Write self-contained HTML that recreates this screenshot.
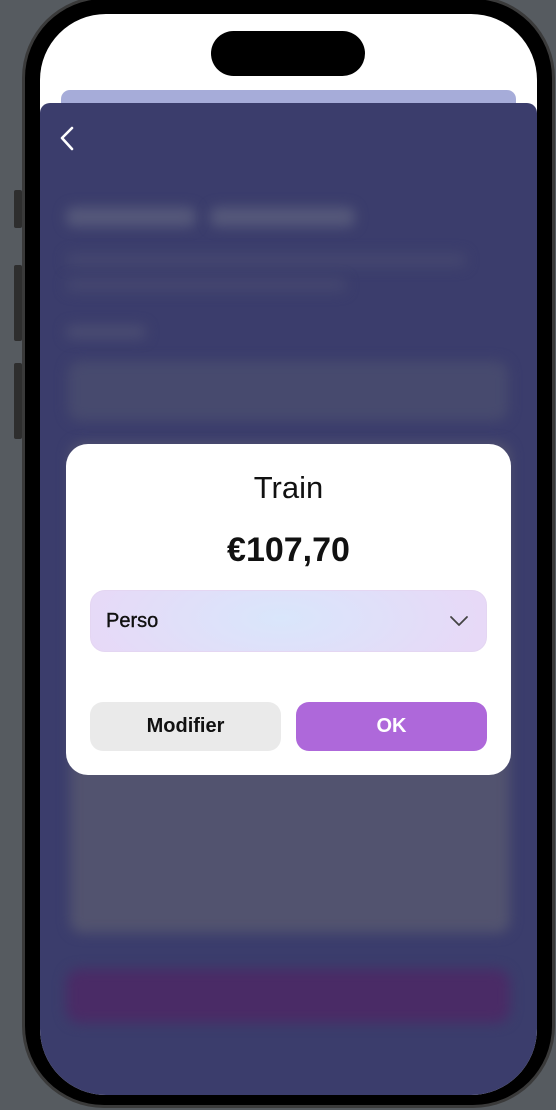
<!DOCTYPE html>
<html><head><meta charset="utf-8"><style>
*{margin:0;padding:0;box-sizing:border-box}
body{width:556px;height:1110px;background:#565b60;position:relative;overflow:hidden;font-family:"Liberation Sans",sans-serif}
.btn{position:absolute;left:14px;width:8px;background:#2e2e2e;border-radius:2px}
.frame{position:absolute;left:22px;top:-4px;width:533px;height:1112px;border-radius:82px;background:#3a3a3a}
.bezel{position:absolute;left:25px;top:-1px;width:527px;height:1106px;border-radius:79px;background:#000}
.screen{position:absolute;left:40px;top:14px;width:497px;height:1081px;border-radius:66px;background:#fff;overflow:hidden}
.island{position:absolute;left:171px;top:17px;width:154px;height:45px;border-radius:23px;background:#000}
.sheet2{position:absolute;left:21px;top:76px;width:455px;height:30px;border-radius:9px;background:#a6acd9}
.sheet{position:absolute;left:0;top:89px;width:497px;height:1000px;border-radius:10px 10px 0 0;background:#3b3d6c;overflow:hidden}
.bl{position:absolute;filter:blur(6px)}
</style></head><body>
<div class="btn" style="top:190px;height:38px"></div>
<div class="btn" style="top:265px;height:76px"></div>
<div class="btn" style="top:363px;height:76px"></div>
<div class="frame"></div>
<div class="bezel"></div>
<div class="screen">
  <div class="island"></div>
  <div class="sheet2"></div>
  <div class="sheet">
    <svg style="position:absolute;left:18px;top:22px" width="20" height="28" viewBox="0 0 20 28"><path d="M14 3 L4 13 L14 24" fill="none" stroke="#fff" stroke-width="2.6" stroke-linecap="round" stroke-linejoin="round"/></svg>
    <div class="bl" style="left:26px;top:104px;width:130px;height:20px;background:#55587a;border-radius:8px"></div>
    <div class="bl" style="left:170px;top:104px;width:145px;height:20px;background:#55587a;border-radius:8px"></div>
    <div class="bl" style="left:26px;top:150px;width:400px;height:14px;background:#44466f;border-radius:6px"></div>
    <div class="bl" style="left:26px;top:175px;width:280px;height:14px;background:#44466f;border-radius:6px"></div>
    <div class="bl" style="left:26px;top:222px;width:80px;height:14px;background:#4a4c72;border-radius:6px"></div>
    <div class="bl" style="left:28px;top:258px;width:440px;height:60px;background:#474a6e;border-radius:12px"></div>
    <div class="bl" style="left:30px;top:340px;width:440px;height:490px;background:#52536f;border-radius:12px"></div>
    <div class="bl" style="left:26px;top:866px;width:444px;height:54px;background:#4a2b66;border-radius:14px"></div>
  </div>
</div>
<div style="position:absolute;left:66px;top:444px;width:445px;height:331px;background:#fff;border-radius:22px">
  <div style="position:absolute;left:0;width:100%;top:26px;text-align:center;font-size:31px;color:#111">Train</div>
  <div style="position:absolute;left:0;width:100%;top:87px;text-align:center;font-size:34px;font-weight:bold;color:#111">€107,70</div>
  <div style="position:absolute;left:24px;top:146px;width:397px;height:62px;border-radius:15px;border:1px solid #e4d6f2;background:radial-gradient(ellipse 200px 80px at 48% 45%,#d9e6fb,#e7d9f7)">
    <div style="position:absolute;left:15px;top:19px;font-size:20px;color:#111;-webkit-text-stroke:0.4px #111">Perso</div>
    <svg style="position:absolute;right:16px;top:22px" width="22" height="16" viewBox="0 0 22 16"><path d="M3 4 L11 12 L19 4" fill="none" stroke="#444" stroke-width="1.8" stroke-linecap="round" stroke-linejoin="round"/></svg>
  </div>
  <div style="position:absolute;left:24px;top:258px;width:191px;height:49px;border-radius:13px;background:#eaeaea;text-align:center;line-height:49px;font-size:20px;font-weight:bold;color:#111">Modifier</div>
  <div style="position:absolute;left:230px;top:258px;width:191px;height:49px;border-radius:13px;background:#ae68da;text-align:center;line-height:49px;font-size:20px;font-weight:bold;color:#fff">OK</div>
</div>
</body></html>
